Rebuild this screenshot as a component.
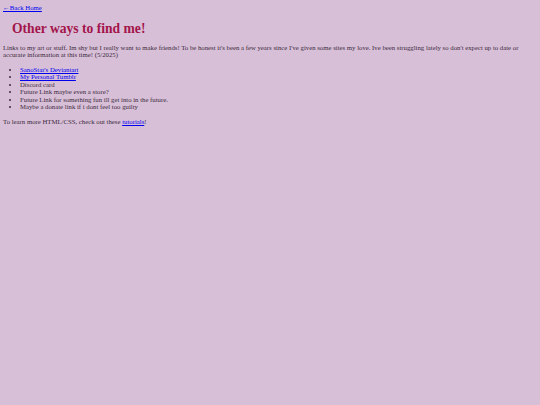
export default function App() {
  return (
    <main
      className="min-h-[405px] w-full bg-[#d8bfd8] px-[3px] pt-[4px] text-[6.75px] leading-[7.5px] text-[#3b2a3b]"
      style={{ fontFamily: '"Liberation Serif", serif' }}
    >
      <a href="#" className="text-[#0000ee] underline">
        ←Back Home
      </a>
      <h1 className="mt-[8px] ml-[9px] text-[13.6px] font-bold leading-[17px] text-[#a3154a]">
        Other ways to find me!
      </h1>
      <p className="mt-[7px]">
        Links to my art or stuff. Im shy but I really want to make friends! To be honest it's been a few years since I've given some sites my love. Ive been struggling lately so don't expect up to date or accurate information at this time! (5/2025)
      </p>
      <ul className="mt-[7px] list-disc pl-[17px]">
        <li>
          <a href="#" className="text-[#0000ee] underline">SanoStar's Deviantart</a>
        </li>
        <li>
          <a href="#" className="text-[#0000ee] underline">My Personal Tumblr</a>
        </li>
        <li>Discord card</li>
        <li>Future Link maybe even a store?</li>
        <li>Future Link for something fun ill get into in the future.</li>
        <li>Maybe a donate link if i dont feel too guilty</li>
      </ul>
      <p className="mt-[7px]">
        To learn more HTML/CSS, check out these{" "}
        <a href="#" className="text-[#0000ee] underline">tutorials</a>!
      </p>
    </main>
  );
}
